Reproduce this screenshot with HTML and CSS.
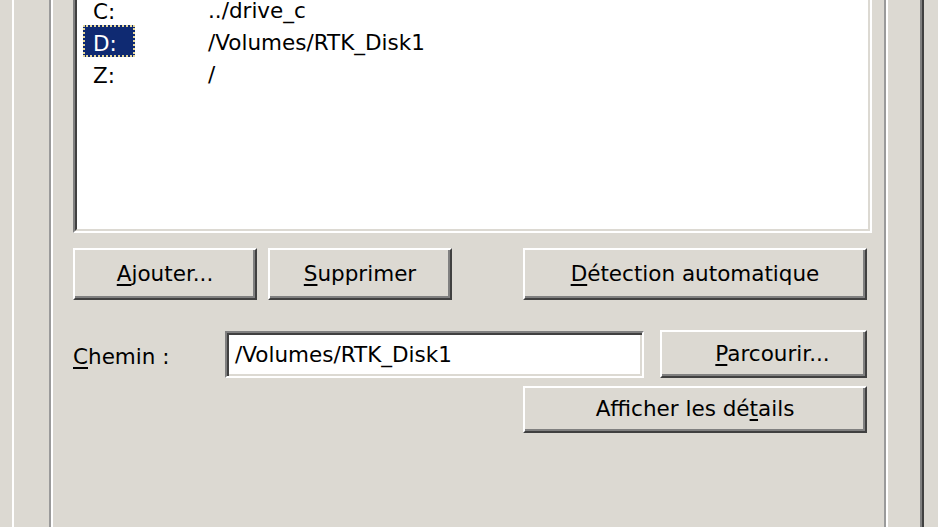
FILE: index.html
```html
<!DOCTYPE html>
<html lang="fr">
<head>
    <meta charset="UTF-8">
    <title>Lecteurs</title>
    <link rel="stylesheet" href="styles.css">
</head>
<body>
    <div class="tab-page">
        <div class="group">
            <div class="drive-list">
                <div class="drive-list-inner">
                    <div class="drive-row">
                        <span class="letter"><span class="letter-text">C:</span></span>
                        <span class="path">../drive_c</span>
                    </div>
                    <div class="drive-row">
                        <span class="letter"><span class="letter-text selected">D:</span></span>
                        <span class="path">/Volumes/RTK_Disk1</span>
                    </div>
                    <div class="drive-row">
                        <span class="letter"><span class="letter-text">Z:</span></span>
                        <span class="path">/</span>
                    </div>
                </div>
            </div>

            <div class="btn-row">
                <button class="btn btn-small"><u>A</u>jouter...</button>
                <button class="btn btn-small"><u>S</u>upprimer</button>
                <button class="btn btn-wide push-right"><u>D</u>étection automatique</button>
            </div>

            <div class="path-row">
                <label class="path-label"><u>C</u>hemin :</label>
                <div class="path-input">/Volumes/RTK_Disk1</div>
                <button class="btn btn-browse"><u>P</u>arcourir...</button>
            </div>

            <div class="details-row">
                <button class="btn btn-wide btn-details">Afficher les dé<u>t</u>ails</button>
            </div>
        </div>
    </div>
</body>
</html>
```

FILE: styles.css
```css
* {
    margin: 0;
    padding: 0;
    box-sizing: border-box;
}

body {
    background: #dcd9d2;
    font-family: "DejaVu Sans", Verdana, sans-serif;
    font-size: 21.5px;
    color: #000;
    overflow: hidden;
    height: 527px;
}

.tab-page {
    margin-left: 12px;
    width: 912px;
    height: 560px;
    border-left: 2px solid #fff;
    border-right: 2px solid #404040;
    box-shadow: inset -2px 0 0 #808080;
    padding-left: 35px;
}

.group {
    width: 839px;
    height: 560px;
    border-left: 2px solid #9a9a9a;
    border-right: 2px solid #fff;
    box-shadow: inset 2px 0 0 #fff, inset -2px 0 0 #9a9a9a;
    padding-left: 22px;
    padding-right: 19px;
}

.drive-list {
    margin-top: -11px;
    margin-right: -5px;
    height: 244px;
    border: 2px solid;
    border-color: #808080 #fff #fff #808080;
}

.drive-list-inner {
    height: 100%;
    background: #fff;
    border: 2px solid;
    border-color: #404040 #dcd9d2 #dcd9d2 #404040;
    padding-left: 6px;
}

.drive-row {
    display: flex;
    height: 32px;
    line-height: 36px;
}

.letter {
    width: 125px;
}

.letter-text {
    display: block;
    width: 52px;
    height: 32px;
    line-height: 30px;
    padding: 2px 8px 0;
    border: 2px solid transparent;
}

.letter-text.selected {
    background: #0f2a72;
    color: #fff;
    border: 2px dotted #e6d79a;
}

.btn {
    font: inherit;
    color: #000;
    background: #dcd9d2;
    border: 2px solid;
    border-color: #fff #404040 #404040 #fff;
    box-shadow: inset -2px -2px 0 #808080;
    text-align: center;
    padding-bottom: 2px;
}

.btn u,
.path-label u {
    text-underline-offset: 3px;
}

.btn-row {
    display: flex;
    gap: 11px;
    margin-top: 15px;
}

.btn-small {
    width: 184px;
    height: 52px;
}

.btn-wide {
    width: 344px;
    height: 52px;
}

.push-right {
    margin-left: auto;
}

.path-row {
    display: flex;
    align-items: center;
    margin-top: 30px;
    height: 48px;
}

.path-label {
    width: 152px;
    padding-top: 4px;
}

.path-input {
    width: 419px;
    height: 47px;
    background: #fff;
    border: 2px solid;
    border-color: #808080 #fff #fff #808080;
    box-shadow: inset 2px 2px 0 #404040, inset -2px -2px 0 #dcd9d2;
    padding: 6px 8px 0 8px;
    line-height: 32px;
}

.btn-browse {
    width: 207px;
    height: 48px;
    margin-left: 16px;
    padding-left: 18px;
}

.details-row {
    display: flex;
    justify-content: flex-end;
    margin-top: 8px;
}

.btn-details {
    height: 47px;
}
```
